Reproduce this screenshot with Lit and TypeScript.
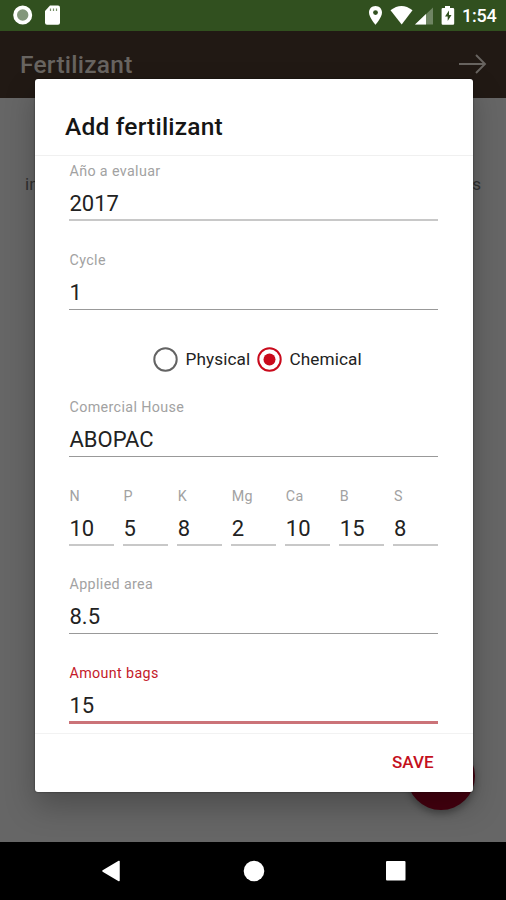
import { LitElement, html, css, svg } from "lit";
import { customElement, property } from "lit/decorators.js";
import { classMap } from "lit/directives/class-map.js";

@customElement("text-field")
class TextField extends LitElement {
  @property() label = "";
  @property() value = "";
  @property() tone = "normal";

  static styles = css`
    :host { display: block; height: 88.6px; min-width: 0; }
    .field { display: flex; flex-direction: column; box-sizing: border-box; height: 59px; border-bottom: 1.5px solid #999; }
    .label { font-size: 14.3px; line-height: 18px; letter-spacing: 0.36px; padding-left: 0.5px; color: #a2a2a2; white-space: nowrap; }
    .value { font-size: 22px; line-height: 26px; margin-top: 11px; padding-left: 0.5px; color: #222; white-space: nowrap; }
    .soft { border-bottom: 2px solid #c8c8c8; }
    .active { height: 60px; border-bottom: 3px solid #cb7378; }
    .active .label { color: #c41a2a; }
  `;

  render() {
    return html`<div class=${classMap({ field: true, [this.tone]: true })}>
      <div class="label">${this.label}</div>
      <div class="value">${this.value}</div>
    </div>`;
  }
}

const nutrients = [["N", "10"], ["P", "5"], ["K", "8"], ["Mg", "2"], ["Ca", "10"], ["B", "15"], ["S", "8"]];

@customElement("app-root")
class AppRoot extends LitElement {
  static styles = css`
    :host { display: block; font-family: Roboto, "Noto Sans", sans-serif; }
    .screen { position: relative; display: flex; flex-direction: column; width: 506px; height: 900px; overflow: hidden; background: #666; }
    .status { height: 30.5px; flex: none; display: flex; align-items: center; box-sizing: border-box; padding: 0 8px 0 12px; background: #31501f; color: #fff; }
    .status svg { display: block; flex: none; }
    .spacer { flex: 1; }
    .clock { font-size: 18px; line-height: 30px; font-weight: 500; width: 36px; white-space: nowrap; letter-spacing: -0.2px; padding-top: 2px; }
    .appbar { height: 67.5px; flex: none; display: flex; align-items: center; justify-content: space-between; box-sizing: border-box; padding: 0 19px 0 20px; background: #211914; }
    .appbar h1 { margin: 0; font-size: 24.5px; font-weight: 500; line-height: 30px; color: #686460; padding-top: 2px; letter-spacing: 0.25px; }
    .page { flex: 1; display: flex; justify-content: space-between; padding: 74px 25px 0 25px; font-size: 17px; line-height: 24px; color: #303030; }
    .nav { height: 58.5px; flex: none; display: flex; align-items: center; box-sizing: border-box; padding-left: 101px; gap: 122.5px; background: #000; }
    .fab { position: absolute; left: 407px; top: 742px; width: 68px; height: 68px; border-radius: 50%; background: #45000f; box-shadow: 0 4px 7px rgba(0,0,0,.3); }
    .dialog { position: absolute; left: 35px; top: 79px; width: 437.5px; height: 713px; display: flex; flex-direction: column; border-radius: 3px; background: #fff; box-shadow: 0 0 2px rgba(0,0,0,.6), 0 14px 30px rgba(0,0,0,.25); }
    .head { height: 77px; flex: none; box-sizing: border-box; padding: 33px 30px 0; border-bottom: 1.5px solid #f0f0f0; font-size: 24.5px; font-weight: 500; line-height: 30px; color: #151515; letter-spacing: 0.2px; }
    .body { flex: 1; padding: 6px 34.5px 0 34px; min-height: 0; overflow: hidden; }
    .row { display: grid; grid-template-columns: repeat(7, 1fr); gap: 9.5px; }
    .radios { height: 59px; display: flex; padding-left: 84px; box-sizing: border-box; font-size: 17.2px; line-height: 40px; color: #222; letter-spacing: 0.1px; }
    .option { display: flex; align-items: center; height: 40px; gap: 7.5px; width: 104px; white-space: nowrap; }
    .option svg { display: block; flex: none; }
    .foot { height: 59px; flex: none; box-sizing: border-box; border-top: 1.5px solid #f2f2f2; display: flex; justify-content: flex-end; padding: 16px 39px 0; font-size: 17px; line-height: 24px; font-weight: 500; color: #c4101c; }
  `;

  radio(on: boolean) {
    return html`<svg width="25" height="25" viewBox="0 0 25 25">
      <circle cx="12.5" cy="12.5" r="11.2" fill="none" stroke=${on ? "#c90a1c" : "#636363"} stroke-width="2"></circle>
      ${on ? svg`<circle cx="12.5" cy="12.5" r="6" fill="#c90a1c"></circle>` : ""}
    </svg>`;
  }

  render() {
    return html`<div class="screen">
      <div class="status">
        <svg width="50" height="30" viewBox="0 0 50 30">
          <circle cx="10.7" cy="15" r="7.6" fill="#83977b" stroke="#fff" stroke-width="3.8"></circle>
          <path d="M38 5.500h8q2 0 2 2v15.200q0 2-2 2H35q-2 0-2-2V11z" fill="#fff"></path>
          <path d="M38.500 8.500v2.500M41.500 8.500v2.500M44.500 8.500v2.500" stroke="#789069" stroke-width="1.200"></path>
        </svg>
        <div class="spacer"></div>
        <svg width="93" height="30" viewBox="369 0 93 30">
          <path d="M375.500 6c-3.800 0-6.500 2.800-6.500 6.400 0 4.700 6.500 12.300 6.500 12.300s6.500-7.600 6.500-12.300c0-3.600-2.700-6.400-6.500-6.400z" fill="#fff"></path>
          <circle cx="375.500" cy="12.600" r="2.400" fill="#31501f"></circle>
          <path d="M390.500 10.200q11-8.600 22 0L401.700 24.500z" fill="#fff"></path>
          <path d="M433 7.500V24.500H415z" fill="#6f8563"></path>
          <path d="M426 14.100V24.500H415z" fill="#fff"></path>
          <path d="M445 6h5v2h3q1.200 0 1.200 1.200v14.300q0 1.200-1.200 1.200h-10.200q-1.200 0-1.200-1.200V9.200q0-1.200 1.200-1.200h2.200z" fill="#fff"></path>
          <path d="M449 10.500l-4 6h2.700v4.500l3.800-6h-2.500z" fill="#31501f"></path>
        </svg>
        <div class="clock">1:54</div>
      </div>
      <div class="appbar">
        <h1>Fertilizant</h1>
        <svg width="29" height="22" viewBox="0 0 29 22">
          <path d="M1 11H27M18 2l9 9-9 9" fill="none" stroke="#686460" stroke-width="1.900"></path>
        </svg>
      </div>
      <div class="page"><span>in</span><span>s</span></div>
      <div class="nav">
        <svg width="20" height="24" viewBox="0 0 20 24"><path d="M18 2.500v19L2 12z" fill="#fff" stroke="#fff" stroke-width="1.500" stroke-linejoin="round"></path></svg>
        <svg width="20" height="22" viewBox="0 0 20 22" overflow="visible"><circle cx="10" cy="11" r="10.300" fill="#fff"></circle></svg>
        <svg width="20" height="20" viewBox="0 0 20 20"><rect width="19.500" height="19.500" x="0" y="0" rx="1" fill="#fff"></rect></svg>
      </div>
      <div class="fab"></div>
      <div class="dialog">
        <div class="head">Add fertilizant</div>
        <div class="body">
          <text-field label="Año a evaluar" value="2017" tone="soft"></text-field>
          <text-field label="Cycle" value="1"></text-field>
          <div class="radios">
            <div class="option">${this.radio(false)}<span>Physical</span></div>
            <div class="option">${this.radio(true)}<span>Chemical</span></div>
          </div>
          <text-field label="Comercial House" value="ABOPAC"></text-field>
          <div class="row">
            ${nutrients.map(([label, value]) => html`<text-field label=${label} value=${value} tone="soft"></text-field>`)}
          </div>
          <text-field label="Applied area" value="8.5"></text-field>
          <text-field label="Amount bags" value="15" tone="active"></text-field>
        </div>
        <div class="foot">SAVE</div>
      </div>
    </div>`;
  }
}
